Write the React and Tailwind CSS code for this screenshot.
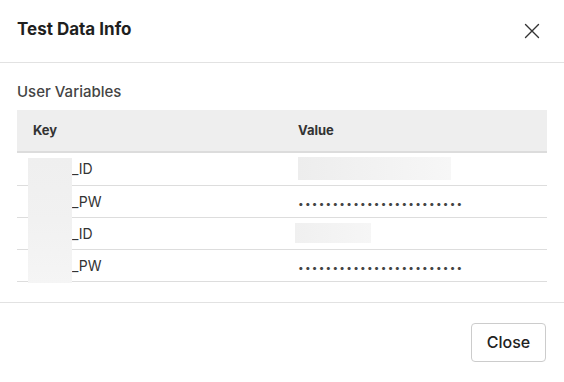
import React from 'react';

const rows = [
  { key: '_ID', value: 'blur-long' },
  { key: '_PW', value: 'dots' },
  { key: '_ID', value: 'blur-short' },
  { key: '_PW', value: 'dots' },
];

const Dots = () => (
  <span className="text-[10px] tracking-[1.27px] text-[#444] leading-none">
    {'•'.repeat(24)}
  </span>
);

export default function App() {
  return (
    <div className="w-[564px] h-[382px] bg-white font-['Inter',sans-serif] text-[#222] flex flex-col">
      {/* Header */}
      <div className="h-[63px] flex items-center justify-between pl-[17px] pr-[20px] border-b border-[#e2e2e2] shrink-0">
        <h1 className="text-[17px] font-bold text-[#1f1f1f] -mt-[2px]">Test Data Info</h1>
        <button className="w-[24px] h-[24px] flex items-center justify-center">
          <svg width="16" height="16" viewBox="0 0 16 16" fill="none" stroke="#333" strokeWidth="1.4" strokeLinecap="round">
            <path d="M1.5 1.5L14.5 14.5M14.5 1.5L1.5 14.5" />
          </svg>
        </button>
      </div>

      {/* Body */}
      <div className="px-[17px] pt-[19px] pb-[20px] border-b border-[#e2e2e2]">
        <p className="text-[15px] leading-[20px] text-[#444] font-medium mb-[8px]">User Variables</p>
        <div className="relative">
          <table className="w-full border-collapse text-[14px]">
            <thead>
              <tr className="bg-[#eeeeee] border-b-2 border-[#dcdcdc]">
                <th className="w-1/2 h-[42px] text-left pl-[16px] font-bold text-[13px] text-[#333]">Key</th>
                <th className="w-1/2 h-[42px] text-left pl-[16px] font-bold text-[13px] text-[#333]">Value</th>
              </tr>
            </thead>
            <tbody>
              {rows.map((r, i) => (
                <tr key={i} className="border-b border-[#dddddd]">
                  <td className={`${i === 0 ? 'h-[33px]' : 'h-[32px]'} pl-[16px] text-[#333]`}>
                    <span className="inline-block w-[39px]" />
                    {r.key}
                  </td>
                  <td className="pl-[16px] text-[#333]">
                    {r.value === 'dots' && <Dots />}
                    {r.value === 'blur-long' && (
                      <div className="w-[153px] h-[23px] bg-gradient-to-r from-[#ededed] to-[#f7f7f7]" />
                    )}
                    {r.value === 'blur-short' && (
                      <div className="-ml-[3px] w-[76px] h-[20px] bg-gradient-to-r from-[#f0f0f0] to-[#f6f6f6]" />
                    )}
                  </td>
                </tr>
              ))}
            </tbody>
          </table>
          {/* masked key names */}
          <div className="absolute left-[11px] top-[48px] w-[44px] h-[125px] bg-gradient-to-b from-[#efefef] via-[#f1f1f1] to-[#f5f5f5]" />
        </div>
      </div>

      {/* Footer */}
      <div className="flex justify-end pt-[20px] pr-[18px]">
        <button className="w-[75px] h-[39px] border border-[#cccccc] rounded-[4px] text-[16px] font-medium text-[#222] bg-white">
          Close
        </button>
      </div>
    </div>
  );
}
